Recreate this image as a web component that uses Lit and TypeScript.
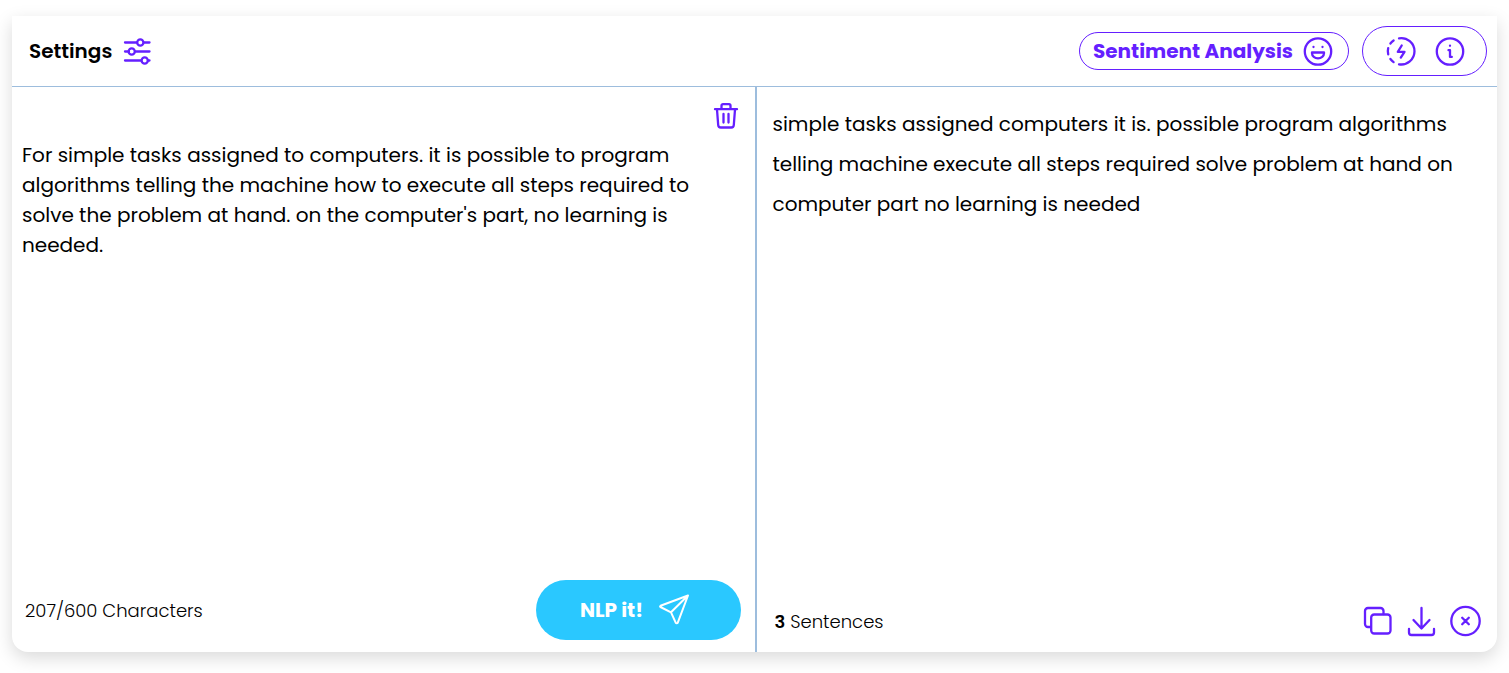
import { LitElement, html, css, svg } from "lit";
import { customElement, state } from "lit/decorators.js";

const SAMPLE =
  "For simple tasks assigned to computers. it is possible to program algorithms telling the machine how to execute all steps required to solve the problem at hand. on the computer's part, no learning is needed.";

const RESULT =
  "simple tasks assigned computers it is. possible program algorithms telling machine execute all steps required solve problem at hand on computer part no learning is needed";

const icon = (size: number, body: unknown, box = 32) =>
  html`<svg width=${size} height=${size} viewBox="0 0 ${box} ${box}" aria-hidden="true">${body}</svg>`;

const icons = {
  sliders: icon(28, svg`
    <path d="M2 5.500h12M21 5.500h5.500M2 14.500h4M12.500 14.500h14M2 23.500h16M25 23.500h1.500"/>
    <circle cx="17.300" cy="5.500" r="3.100"/><circle cx="8.700" cy="14.500" r="3.100"/><circle cx="21.700" cy="23.500" r="3.100"/>`, 28),
  smile: icon(32, svg`
    <circle cx="16" cy="16.500" r="13.200"/>
    <path d="M10 17.500h12v.800a6 5 0 0 1-12 0z"/>
    <path d="M11.500 12v.1M20.500 12v.1"/>`),
  bolt: icon(32, svg`
    <path d="M14 3.300a13.200 13.200 0 1 1 0 26"/>
    <path d="M8.600 5.500a13.200 13.200 0 0 0-3.200 3M3.200 13.100a13.200 13.200 0 0 0 0 6.200M5.400 24a13.200 13.200 0 0 0 3.200 3.100"/>
    <path d="M16.700 10.500l-3.900 6.300h6.700l-3.700 5.800"/>`),
  info: icon(32, svg`
    <circle cx="16" cy="16.500" r="13.200"/>
    <path d="M14.500 15.200h1.500v6.700h1.800M16 10.700v.1"/>`),
  trash: icon(28, svg`
    <path d="M3 7.200h22M9.500 7V3.700a1.500 1.500 0 0 1 1.500-1.500h6a1.500 1.500 0 0 1 1.500 1.500V7"/>
    <path d="M5 7.500l1.200 15.500a2.600 2.600 0 0 0 2.600 2.500h10.400a2.600 2.600 0 0 0 2.600-2.500L23 7.500M11.500 12v8.500M16.500 12v8.500"/>`, 28),
  send: icon(32, svg`
    <path d="M30 1.500L2.500 11.800c-.6.300-.6.900 0 1.200L13 18.300l4.800 10.500c.3.700 1.600.7 1.900 0L30 1.500zM30 1.500L13 18.300"/>`),
  copy: icon(32, svg`
    <path d="M9.500 22H7a3 3 0 0 1-3-3V6a3 3 0 0 1 3-3h12.500a3 3 0 0 1 3 3v3"/>
    <rect x="10.200" y="9.500" width="19.300" height="19" rx="3"/>`),
  download: icon(32, svg`
    <path d="M16.500 3v20.500M8.500 15l8 8.500 8-8.500M4 24v3.500a2.500 2.500 0 0 0 2.500 2.500h20a2.500 2.500 0 0 0 2.500-2.500V24"/>`),
  close: icon(32, svg`
    <circle cx="16.500" cy="16" r="14.200"/>
    <path d="M13.200 12.700l6.600 6.600M19.800 12.700l-6.600 6.600"/>`),
};

@customElement("app-root")
export class AppRoot extends LitElement {
  @state() private text = SAMPLE;

  static styles = css`
    :host {
      box-sizing: border-box;
      min-height: 100vh;
      padding: 16px 12px 21px;
      background: #fff;
      color: #000;
      font-family: Poppins, Inter, "Open Sans", sans-serif;
      display: flex;
      overflow: hidden;
    }
    * { box-sizing: border-box; }
    button {
      font: inherit;
      color: inherit;
      background: none;
      border: 0;
      padding: 0;
      margin: 0;
      display: inline-flex;
      align-items: center;
      cursor: pointer;
    }
    svg {
      display: block;
      flex: none;
      fill: none;
      stroke: #651fff;
      stroke-width: 2.3;
      stroke-linecap: round;
      stroke-linejoin: round;
    }
    .card {
      flex: 1;
      display: flex;
      flex-direction: column;
      border-radius: 0 0 16px 16px;
      background: #fff;
      box-shadow: 0 6px 18px rgba(0, 0, 0, 0.15);
    }
    .bar {
      display: flex;
      align-items: center;
      justify-content: space-between;
      height: 71px;
      padding: 0 10px 0 17px;
      border-bottom: 1px solid #9dbddd;
    }
    .settings { gap: 11px; font-size: 20px; font-weight: 600; }
    .tools { display: flex; align-items: center; gap: 13px; }
    .mode {
      height: 38px;
      padding: 0 14px 0 13px;
      gap: 9px;
      border: 1px solid #651fff;
      border-radius: 19px;
      color: #651fff;
      font-size: 20px;
      font-weight: 700;
    }
    .pill {
      display: flex;
      align-items: center;
      gap: 17px;
      height: 50px;
      padding: 0 20px 0 22px;
      border: 1px solid #651fff;
      border-radius: 25px;
    }
    .panes { flex: 1; display: grid; grid-template-columns: 1fr 1fr; }
    .pane { display: flex; flex-direction: column; min-width: 0; }
    .source { padding: 15px 14px 12px 10px; }
    .clear { align-self: flex-end; margin-right: 1px; }
    .input {
      flex: 1;
      width: 100%;
      margin: 0;
      padding: 10px 32px 0 0;
      border: 0;
      outline: 0;
      resize: none;
      background: none;
      color: inherit;
      font: inherit;
      font-size: 20px;
      line-height: 30px;
    }
    .foot { display: flex; align-items: center; justify-content: space-between; }
    .count { padding-left: 3px; font-size: 18px; font-weight: 300; }
    .run {
      justify-content: center;
      gap: 15px;
      width: 205px;
      height: 60px;
      padding-right: 6px;
      border-radius: 30px;
      background: #2ac8ff;
      color: #fff;
      font-size: 20px;
      font-weight: 700;
    }
    .run svg { stroke: #fff; stroke-width: 2; }
    .result { padding: 17px 16px 15px; border-left: 2px solid #9dbddd; }
    .output { flex: 1; margin: 0; font-size: 20px; line-height: 40px; }
    .sentences { padding-left: 2px; font-size: 18px; font-weight: 300; }
    .sentences b { font-weight: 600; }
    .actions { display: flex; gap: 12px; }
  `;

  private edit(e: Event) {
    this.text = (e.target as HTMLTextAreaElement).value;
  }

  render() {
    return html`
      <main class="card">
        <header class="bar">
          <button class="settings">Settings ${icons.sliders}</button>
          <div class="tools">
            <button class="mode">Sentiment Analysis ${icons.smile}</button>
            <div class="pill">
              <button aria-label="Quick run">${icons.bolt}</button>
              <button aria-label="Information">${icons.info}</button>
            </div>
          </div>
        </header>
        <div class="panes">
          <section class="pane source">
            <button class="clear" aria-label="Clear text" @click=${() => (this.text = "")}>${icons.trash}</button>
            <textarea class="input" aria-label="Text to process" maxlength="600" spellcheck="false"
              .value=${this.text} @input=${this.edit}></textarea>
            <div class="foot">
              <span class="count">${this.text.length}/600 Characters</span>
              <button class="run">NLP it! ${icons.send}</button>
            </div>
          </section>
          <section class="pane result">
            <p class="output">${RESULT}</p>
            <div class="foot">
              <span class="sentences"><b>3</b> Sentences</span>
              <div class="actions">
                <button aria-label="Copy">${icons.copy}</button>
                <button aria-label="Download">${icons.download}</button>
                <button aria-label="Close">${icons.close}</button>
              </div>
            </div>
          </section>
        </div>
      </main>
    `;
  }
}
